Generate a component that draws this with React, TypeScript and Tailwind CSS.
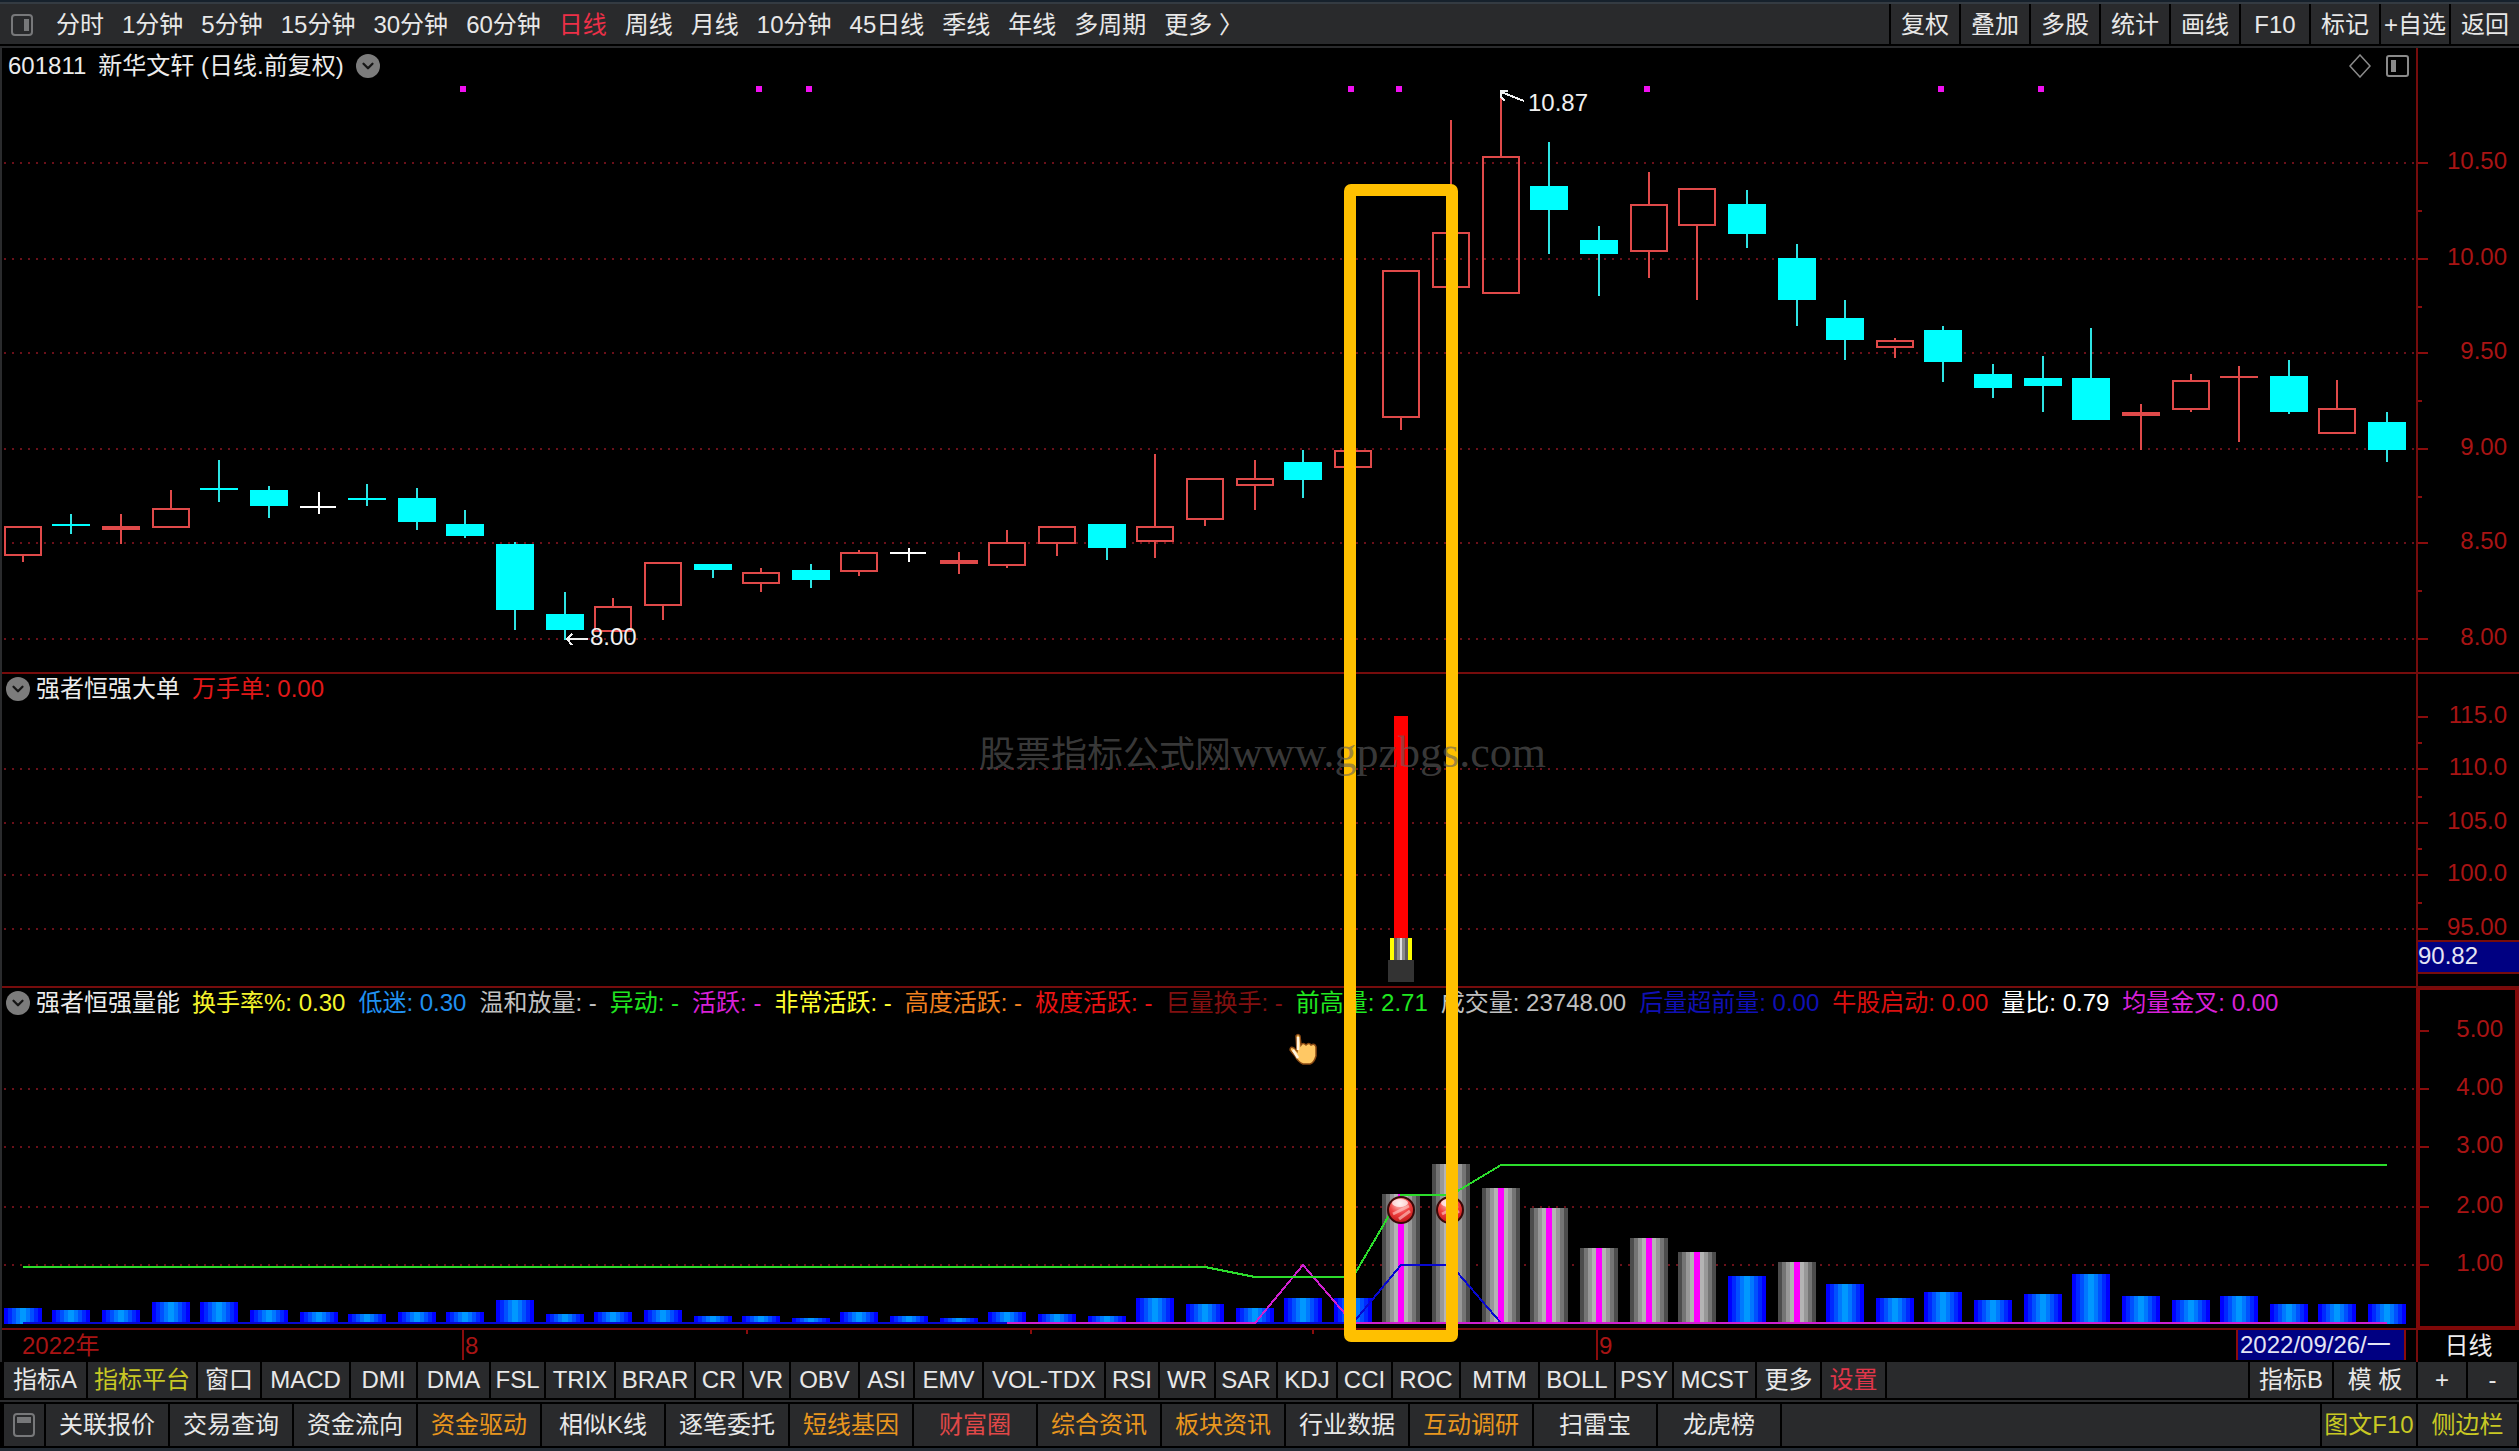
import { useState } from "react";
import clsx from "clsx";
import { ChevronDown } from "lucide-react";

const CHART_W = 2416;
const MAIN_W = 2519;

const PERIODS = [
  "分时", "1分钟", "5分钟", "15分钟", "30分钟", "60分钟", "日线", "周线",
  "月线", "10分钟", "45日线", "季线", "年线", "多周期", "更多 〉",
];

const TOOLS = ["复权", "叠加", "多股", "统计", "画线", "F10", "标记", "+自选", "返回"];

// kind, high, body top, body bottom, low
type Kind = "up" | "down" | "flat";
type Candle = [Kind, number, number, number, number];

const CANDLES: Candle[] = [
  ["up", 526, 526, 556, 562],
  ["down", 514, 524, 526, 534],
  ["up", 514, 526, 530, 544],
  ["up", 490, 508, 528, 528],
  ["down", 460, 488, 490, 502],
  ["down", 486, 490, 506, 518],
  ["flat", 492, 506, 508, 514],
  ["down", 484, 498, 500, 506],
  ["down", 488, 498, 522, 530],
  ["down", 510, 524, 536, 538],
  ["down", 542, 544, 610, 630],
  ["down", 592, 614, 630, 640],
  ["up", 598, 606, 632, 632],
  ["up", 562, 562, 606, 620],
  ["down", 564, 564, 570, 578],
  ["up", 568, 572, 584, 592],
  ["down", 564, 570, 580, 588],
  ["up", 550, 552, 572, 576],
  ["flat", 548, 552, 554, 562],
  ["up", 552, 560, 564, 574],
  ["up", 530, 542, 566, 568],
  ["up", 526, 526, 544, 556],
  ["down", 524, 524, 548, 560],
  ["up", 454, 526, 542, 558],
  ["up", 478, 478, 520, 526],
  ["up", 460, 478, 486, 510],
  ["down", 450, 462, 480, 498],
  ["up", 450, 450, 468, 468],
  ["up", 270, 270, 418, 430],
  ["up", 120, 232, 288, 288],
  ["up", 98, 156, 294, 294],
  ["down", 142, 186, 210, 254],
  ["down", 226, 240, 254, 296],
  ["up", 172, 204, 252, 278],
  ["up", 188, 188, 226, 300],
  ["down", 190, 204, 234, 248],
  ["down", 244, 258, 300, 326],
  ["down", 300, 318, 340, 360],
  ["up", 338, 340, 348, 358],
  ["down", 326, 330, 362, 382],
  ["down", 364, 374, 388, 398],
  ["down", 356, 378, 386, 412],
  ["down", 328, 378, 420, 420],
  ["up", 404, 412, 416, 450],
  ["up", 374, 380, 410, 412],
  ["up", 366, 376, 378, 442],
  ["down", 360, 376, 412, 414],
  ["up", 380, 408, 434, 434],
  ["down", 412, 422, 450, 462],
];

const VOLUME_TOPS = [
  1308, 1310, 1310, 1302, 1302, 1310, 1312, 1314, 1312, 1312, 1300, 1314, 1312,
  1310, 1316, 1316, 1318, 1312, 1316, 1318, 1312, 1314, 1316, 1298, 1304, 1308,
  1298, 1298, 1194, 1164, 1188, 1208, 1248, 1238, 1252, 1276, 1262, 1284, 1298,
  1292, 1300, 1294, 1274, 1296, 1300, 1296, 1304, 1304, 1304,
];
const ACTIVE = [28, 29, 30, 31, 32, 33, 34, 36];
const SIGNALS = [9, 15, 16, 27, 28, 33, 39, 41];

const cx = (i: number) => 2 * Math.floor(11.225 + 24.633 * i) + 1;

type Mark = { y: number; label: string };
const PRICE_MARKS: Mark[] = [
  { y: 163, label: "10.50" },
  { y: 259, label: "10.00" },
  { y: 353, label: "9.50" },
  { y: 449, label: "9.00" },
  { y: 543, label: "8.50" },
  { y: 639, label: "8.00" },
];
const ORDER_MARKS: Mark[] = [
  { y: 717, label: "115.0" },
  { y: 769, label: "110.0" },
  { y: 823, label: "105.0" },
  { y: 875, label: "100.0" },
  { y: 929, label: "95.00" },
];
const VOLUME_MARKS: Mark[] = [
  { y: 1031, label: "5.00" },
  { y: 1089, label: "4.00" },
  { y: 1147, label: "3.00" },
  { y: 1207, label: "2.00" },
  { y: 1265, label: "1.00" },
];

const VOLUME_FIELDS = [
  { text: "换手率%: 0.30", color: "text-[#f4f42c]" },
  { text: "低迷: 0.30", color: "text-[#2090f0]" },
  { text: "温和放量: -", color: "text-[#c0c0c0]" },
  { text: "异动: -", color: "text-[#20e420]" },
  { text: "活跃: -", color: "text-[#d820d8]" },
  { text: "非常活跃: -", color: "text-[#ffff30]" },
  { text: "高度活跃: -", color: "text-[#f08020]" },
  { text: "极度活跃: -", color: "text-[#e81414]" },
  { text: "巨量换手: -", color: "text-[#801010]" },
  { text: "前高量: 2.71", color: "text-[#20e820]" },
  { text: "成交量: 23748.00", color: "text-[#c0c0c0]" },
  { text: "后量超前量: 0.00", color: "text-[#1010b4]" },
  { text: "牛股启动: 0.00", color: "text-[#d81010]" },
  { text: "量比: 0.79", color: "text-white" },
  { text: "均量金叉: 0.00", color: "text-[#d820d8]" },
];

const INDICATORS = [
  { name: "指标A", style: "w-[84px]" },
  { name: "指标平台", style: "w-[110px] text-[#c8c824]" },
  { name: "窗口", style: "w-[64px]" },
  { name: "MACD", style: "w-[89px]" },
  { name: "DMI", style: "w-[67px]" },
  { name: "DMA", style: "w-[73px]" },
  { name: "FSL", style: "w-[55px]" },
  { name: "TRIX", style: "w-[70px]" },
  { name: "BRAR", style: "w-[80px]" },
  { name: "CR", style: "w-[48px]" },
  { name: "VR", style: "w-[47px]" },
  { name: "OBV", style: "w-[69px]" },
  { name: "ASI", style: "w-[55px]" },
  { name: "EMV", style: "w-[69px]" },
  { name: "VOL-TDX", style: "w-[122px]" },
  { name: "RSI", style: "w-[54px]" },
  { name: "WR", style: "w-[56px]" },
  { name: "SAR", style: "w-[62px]" },
  { name: "KDJ", style: "w-[60px]" },
  { name: "CCI", style: "w-[55px]" },
  { name: "ROC", style: "w-[68px]" },
  { name: "MTM", style: "w-[79px]" },
  { name: "BOLL", style: "w-[76px]" },
  { name: "PSY", style: "w-[58px]" },
  { name: "MCST", style: "w-[83px]" },
  { name: "更多", style: "w-[65px]" },
  { name: "设置", style: "w-[65px] text-[#e0364a]" },
];

const LINKS = [
  { name: "关联报价", style: "" },
  { name: "交易查询", style: "" },
  { name: "资金流向", style: "" },
  { name: "资金驱动", style: "text-[#e8961e]" },
  { name: "相似K线", style: "" },
  { name: "逐笔委托", style: "" },
  { name: "短线基因", style: "text-[#e8961e]" },
  { name: "财富圈", style: "text-[#e04848]" },
  { name: "综合资讯", style: "text-[#e8961e]" },
  { name: "板块资讯", style: "text-[#e8961e]" },
  { name: "行业数据", style: "" },
  { name: "互动调研", style: "text-[#e8961e]" },
  { name: "扫雷宝", style: "" },
  { name: "龙虎榜", style: "" },
];

function CollapseButton() {
  return (
    <button
      type="button"
      aria-label="展开"
      className="flex size-6 shrink-0 items-center justify-center rounded-full bg-[#7c7c7c] text-[#161616]"
    >
      <ChevronDown size={18} strokeWidth={3} />
    </button>
  );
}

function GridLine({ y }: { y: number }) {
  return <line x1="4" x2={CHART_W} y1={y} y2={y} stroke="#6a1019" strokeWidth="2" strokeDasharray="2 6" />;
}

function CandleMark({ candle, i }: { candle: Candle; i: number }) {
  const [kind, high, top, bottom, low] = candle;
  const x = cx(i);
  const wick = kind === "up" ? "#e04a4a" : kind === "down" ? "#2ee4e4" : "#ffffff";
  const fill = kind === "down" ? "#00ffff" : wick;
  const hollow = kind === "up" && bottom - top > 4;
  return (
    <g>
      {high < top && <rect x={x - 1} y={high} width="2" height={top - high} fill={wick} />}
      {low > bottom && <rect x={x - 1} y={bottom} width="2" height={low - bottom} fill={wick} />}
      {hollow ? (
        <rect x={x - 18} y={top + 1} width="36" height={bottom - top - 2} fill="none" stroke={wick} strokeWidth="2" />
      ) : (
        <rect x={x - 19} y={top} width={kind === "flat" ? 36 : 38} height={bottom - top} fill={fill} />
      )}
    </g>
  );
}

function Axis({ top, height, marks, minor }: { top: number; height: number; marks: Mark[]; minor: number[] }) {
  return (
    <>
      <svg
        className="absolute inset-0 size-full"
        viewBox={`0 ${top} 101 ${height}`}
        preserveAspectRatio="none"
        shapeRendering="crispEdges"
        fill="#8a0c0c"
      >
        {marks.map((m) => <rect key={m.y} x="0" y={m.y - 1} width="10" height="2" />)}
        {minor.map((y) => <rect key={y} x="0" y={y - 1} width="4" height="2" />)}
      </svg>
      {marks.map((m) => (
        <span
          key={m.label}
          className="absolute right-3 -translate-y-1/2 leading-7"
          style={{ top: `${((m.y - 2 - top) / height) * 100}%` }}
        >
          {m.label}
        </span>
      ))}
    </>
  );
}

function SignalBall({ x, y }: { x: number; y: number }) {
  return (
    <g shapeRendering="auto">
      <circle cx={x} cy={y} r="13" fill="url(#ball)" stroke="#3a0808" strokeWidth="2" />
      <path d={`M${x - 8} ${y + 4} L${x + 8} ${y - 4} M${x - 2} ${y + 9} L${x + 9} ${y + 1}`} stroke="#ffd0cc" strokeWidth="3" fill="none" opacity="0.6" />
      <ellipse cx={x - 1} cy={y - 7} rx="8" ry="4" fill="#fff" opacity="0.7" />
    </g>
  );
}

function PricePanel() {
  return (
    <section className="flex min-h-0 flex-[626]">
      <div className="relative flex-1 border-b-2 border-[#760c0c]">
        <svg className="absolute inset-0 size-full" viewBox="0 48 2416 624" preserveAspectRatio="none" shapeRendering="crispEdges">
          {PRICE_MARKS.map((m) => <GridLine key={m.y} y={m.y} />)}
          {CANDLES.map((c, i) => <CandleMark key={i} candle={c} i={i} />)}
          {SIGNALS.map((i) => <rect key={i} x={cx(i) - 5} y="86" width="6" height="6" fill="#f010f0" />)}
          <g stroke="#f0f0f0" strokeWidth="2" fill="none">
            <path d="M1501 92 L1524 101 M1508 91 H1501 V97 L1505 101" />
            <path d="M566 639 H588 M572 634 L567 639 L572 645" />
          </g>
        </svg>
        <header className="relative flex h-9 items-center gap-3 pr-1.5 pl-2 text-[#ececec]">
          <h1 className="flex gap-3">
            <span>601811</span>
            <span>新华文轩 (日线.前复权)</span>
          </h1>
          <CollapseButton />
          <div className="ml-auto flex items-center gap-3.5">
            <button type="button" aria-label="标注">
              <svg width="24" height="24" viewBox="0 0 24 24" fill="none" stroke="#8a8a8a" strokeWidth="1.5">
                <path d="M12 1 L22 12 L12 23 L2 12 Z" />
              </svg>
            </button>
            <button type="button" aria-label="侧栏">
              <svg width="24" height="24" viewBox="0 0 24 24" fill="none" stroke="#8a8a8a" strokeWidth="2">
                <rect x="1" y="2" width="21" height="20" rx="2" />
                <rect x="5" y="6" width="5" height="12" fill="#8a8a8a" stroke="none" />
              </svg>
            </button>
          </div>
        </header>
        <span className="absolute -translate-y-1/2 leading-7 text-[#f0f0f0]" style={{ left: `${(1528 / CHART_W) * 100}%`, top: `${(55 / 624) * 100}%` }}>
          10.87
        </span>
        <span className="absolute -translate-y-1/2 leading-7 text-[#f0f0f0]" style={{ left: `${(590 / CHART_W) * 100}%`, top: `${(589 / 624) * 100}%` }}>
          8.00
        </span>
      </div>
      <div className="relative w-[103px] border-b-2 border-l-2 border-[#760c0c]">
        <Axis top={48} height={624} marks={PRICE_MARKS} minor={[211, 307, 401, 497, 591]} />
      </div>
    </section>
  );
}

function OrderPanel() {
  return (
    <section className="flex min-h-0 flex-[314]">
      <div className="relative flex-1 border-b-2 border-[#760c0c]">
        <svg className="absolute inset-0 size-full" viewBox="0 674 2416 312" preserveAspectRatio="none" shapeRendering="crispEdges">
          {ORDER_MARKS.slice(1).map((m) => <GridLine key={m.y} y={m.y} />)}
          <rect x="1394" y="716" width="14" height="222" fill="#ff0000" />
          <rect x="1390" y="938" width="22" height="22" fill="#ffff00" />
          <rect x="1394" y="938" width="14" height="22" fill="#5c5c5c" />
          <rect x="1397" y="938" width="8" height="22" fill="#8c8c8c" />
          <rect x="1400" y="938" width="2" height="22" fill="#e0e0e0" />
          <rect x="1388" y="960" width="26" height="22" fill="#333333" />
        </svg>
        <header className="relative flex h-[30px] items-center pl-1.5">
          <CollapseButton />
          <h2 className="pl-1.5 text-[#ececec]">强者恒强大单</h2>
          <span className="pl-3 text-[#e01818]">万手单: 0.00</span>
        </header>
      </div>
      <div className="relative w-[103px] border-b-2 border-l-2 border-[#760c0c]">
        <Axis top={674} height={312} marks={ORDER_MARKS} minor={[743, 797, 849, 903]} />
        <span className="absolute inset-x-0 bottom-3 h-[34px] border-y-2 border-[#760c0c] bg-[#000082] leading-7 text-[#e4e4f4]">
          90.82
        </span>
      </div>
    </section>
  );
}

function VolumePanel() {
  const green = [[0, 1267], [24, 1267], [25, 1277], [27, 1277], [28, 1195], [29, 1195], [30, 1165], [48, 1165]];
  const magenta = [[20, 1323], [25, 1323], [26, 1265], [27, 1323], [48, 1323]];
  const blue = [[0, 1323], [27, 1323], [28, 1265], [29, 1265], [30, 1323]];
  const points = (list: number[][]) => list.map(([i, y]) => `${cx(i)},${y}`).join(" ");
  return (
    <section className="flex min-h-0 flex-[342]">
      <div className="relative flex-1 border-b-2 border-[#760c0c]">
        <svg className="absolute inset-0 size-full" viewBox="0 988 2416 340" preserveAspectRatio="none" shapeRendering="crispEdges">
          <defs>
            <radialGradient id="ball" cx="0.45" cy="0.25" r="0.8">
              <stop offset="0" stopColor="#ffd0cc" />
              <stop offset="0.5" stopColor="#f04040" />
              <stop offset="1" stopColor="#b81010" />
            </radialGradient>
          </defs>
          {VOLUME_MARKS.slice(1).map((m) => <GridLine key={m.y} y={m.y} />)}
          {VOLUME_TOPS.map((y, i) => {
            const shades = ACTIVE.includes(i)
              ? ["#4c4c4c", "#747474", "#989898", "#b4b4b4", "#cccccc"]
              : ["#0000ff", "#0028ff", "#0050ff", "#0078ff", "#0098ff"];
            return (
              <g key={i}>
                {shades.map((fill, n) => (
                  <rect key={fill} x={cx(i) - 19 + n * 4} y={y} width={38 - n * 8} height={1324 - y} fill={fill} />
                ))}
              </g>
            );
          })}
          {ACTIVE.map((i) => (
            <rect key={i} x={cx(i) - 3} y={VOLUME_TOPS[i]} width="6" height={1322 - VOLUME_TOPS[i]} fill="#ff00ff" />
          ))}
          <g fill="none" strokeWidth="2">
            <polyline points={points(blue)} stroke="#0808d0" />
            <polyline points={points(magenta)} stroke="#d020d0" />
            <polyline points={points(green)} stroke="#2cdc2c" />
          </g>
          <SignalBall x={1401} y={1210} />
          <SignalBall x={1450} y={1210} />
        </svg>
        <header className="relative flex h-[30px] items-center pl-1.5">
          <CollapseButton />
          <h2 className="pl-1.5 text-[#ececec]">强者恒强量能</h2>
          <ul className="flex gap-[13px] pl-3">
            {VOLUME_FIELDS.map((f) => (
              <li key={f.text} className={clsx("whitespace-nowrap", f.color)}>{f.text}</li>
            ))}
          </ul>
        </header>
      </div>
      <div className="relative w-[103px] border-4 border-t-2 border-[#800808]">
        <Axis top={990} height={336} marks={VOLUME_MARKS} minor={[]} />
      </div>
    </section>
  );
}

function TimeAxis() {
  return (
    <div className="flex h-8 leading-8 text-[#a81414]">
      <div className="relative flex-1">
        <svg className="absolute inset-0 size-full" viewBox="0 1330 2416 32" preserveAspectRatio="none" shapeRendering="crispEdges" fill="#8a0c0c">
          <rect x="462" y="1330" width="2" height="30" />
          <rect x="1596" y="1330" width="2" height="30" />
          {[746, 1030, 1312].map((x) => <rect key={x} x={x} y="1330" width="2" height="4" />)}
        </svg>
        <span className="absolute left-[22px]">2022年</span>
        <span className="absolute" style={{ left: `${(465 / CHART_W) * 100}%` }}>8</span>
        <span className="absolute" style={{ left: `${(1599 / CHART_W) * 100}%` }}>9</span>
        <time className="absolute right-2.5 h-[30px] w-[170px] border-x-2 border-[#8a0c0c] bg-[#000082] pl-0.5 leading-[30px] text-[#e4e4f4]">
          2022/09/26/一
        </time>
      </div>
      <div className="w-[103px] border-l-2 border-[#760c0c] text-center text-[#ececec]">日线</div>
    </div>
  );
}

export default function App() {
  const [period, setPeriod] = useState("日线");

  return (
    <div className="flex h-screen flex-col overflow-hidden bg-black font-['Liberation_Sans','Noto_Sans_CJK_SC',sans-serif] text-2xl leading-none text-[#e8e8e8]">
      <div className="h-1 shrink-0 border-t-2 border-[#16212c] bg-[#343b42]" />

      {/* Toolbar */}
      <nav className="flex h-10 shrink-0 bg-[#292a2c]">
        <div className="flex items-center gap-[18px] pt-0.5 pl-2.5">
          <button type="button" aria-label="布局" className="mr-1">
            <svg width="24" height="24" viewBox="0 0 24 24" fill="none" stroke="#77787a" strokeWidth="2">
              <rect x="2" y="2" width="20" height="20" rx="3" />
              <rect x="14" y="6" width="5" height="12" fill="#77787a" stroke="none" />
            </svg>
          </button>
          {PERIODS.map((p) => (
            <button
              key={p}
              type="button"
              onClick={() => setPeriod(p)}
              className={clsx("whitespace-nowrap", p === period && "text-[#ec3048]")}
            >
              {p}
            </button>
          ))}
        </div>
        <div className="ml-auto flex">
          {TOOLS.map((t) => (
            <button key={t} type="button" className="w-[70px] overflow-hidden border-l-2 border-black pt-0.5 whitespace-nowrap">
              {t}
            </button>
          ))}
        </div>
      </nav>
      <div className="h-1 shrink-0 border-t-2 border-black bg-[#2a2b2d]" />

      {/* Charts */}
      <main className="relative flex min-h-0 flex-1 flex-col text-[#a81414]">
        <PricePanel />
        <OrderPanel />
        <VolumePanel />
        <TimeAxis />
        <svg className="pointer-events-none absolute inset-0 size-full" viewBox={`0 48 ${MAIN_W} 1314`} preserveAspectRatio="none">
          <rect x="0" y="48" width="2" height="1314" fill="#2a2b2d" />
          <rect x="1350" y="190" width="102" height="1146" rx="1" fill="none" stroke="#ffc000" strokeWidth="12" strokeLinejoin="round" />
        </svg>
        <p
          className="pointer-events-none absolute flex -translate-y-1/2 items-baseline font-['Liberation_Serif','Noto_Sans_CJK_SC',serif] text-4xl whitespace-nowrap text-[#5f5f5f]/60"
          style={{ left: `${(979 / MAIN_W) * 100}%`, top: `${(705 / 1314) * 100}%` }}
        >
          股票指标公式网<span className="text-[44px]">www.gpzbgs.com</span>
        </p>
        <svg
          className="pointer-events-none absolute h-8 w-7"
          style={{ left: `${(1289 / MAIN_W) * 100}%`, top: `${(985 / 1314) * 100}%` }}
          viewBox="0 0 28 32"
        >
          <path
            d="M7 3 Q9 0 11 3 L12 12 Q14 9 17 12 Q20 9 22 12 Q26 10 27 14 L27 23 Q25 30 21 31 L14 31 Q9 29 6 23 L1 17 Q1 13 5 15 L8 18 Z"
            fill="#ffc864"
            stroke="#8a4a14"
            strokeWidth="1.5"
          />
          <path d="M9 4 V17 M4 17 L9 25" stroke="#fff4e0" strokeWidth="2.5" fill="none" />
        </svg>
      </main>

      {/* Indicators */}
      <nav className="ml-0.5 flex h-9 shrink-0 border-x-2 border-black bg-[#292a2c]">
        {INDICATORS.map((item) => (
          <button key={item.name} type="button" className={clsx("border-r-2 border-black whitespace-nowrap", item.style)}>
            {item.name}
          </button>
        ))}
        <div className="ml-auto flex">
          <button type="button" className="w-[84px] border-l-2 border-black">指标B</button>
          <button type="button" className="w-[84px] border-l-2 border-black">模 板</button>
          <button type="button" className="w-[50px] border-l-2 border-black">+</button>
          <button type="button" className="w-[51px] border-l-2 border-black">-</button>
        </div>
      </nav>
      <div className="h-1.5 shrink-0 border-y-2 border-black bg-[#2c2d2f]" />

      {/* Links */}
      <nav className="ml-0.5 flex h-[42px] shrink-0 border-x-2 border-black bg-[#292a2c]">
        <button type="button" aria-label="菜单" className="flex w-[42px] items-center justify-center border-r-2 border-black">
          <svg width="24" height="24" viewBox="0 0 24 24" fill="none" stroke="#77787a" strokeWidth="2">
            <rect x="2" y="1" width="20" height="22" rx="3" />
            <rect x="5" y="4" width="14" height="6" fill="#77787a" stroke="none" />
          </svg>
        </button>
        {LINKS.map((item) => (
          <button key={item.name} type="button" className={clsx("w-[124px] border-r-2 border-black whitespace-nowrap", item.style)}>
            {item.name}
          </button>
        ))}
        <div className="ml-auto flex text-[#c8c824]">
          <button type="button" className="w-24 border-l-2 border-black whitespace-nowrap">图文F10</button>
          <button type="button" className="w-[101px] border-l-2 border-black">侧边栏</button>
        </div>
      </nav>
      <div className="h-[5px] shrink-0 border-t-2 border-black bg-[#222a33]" />
    </div>
  );
}
